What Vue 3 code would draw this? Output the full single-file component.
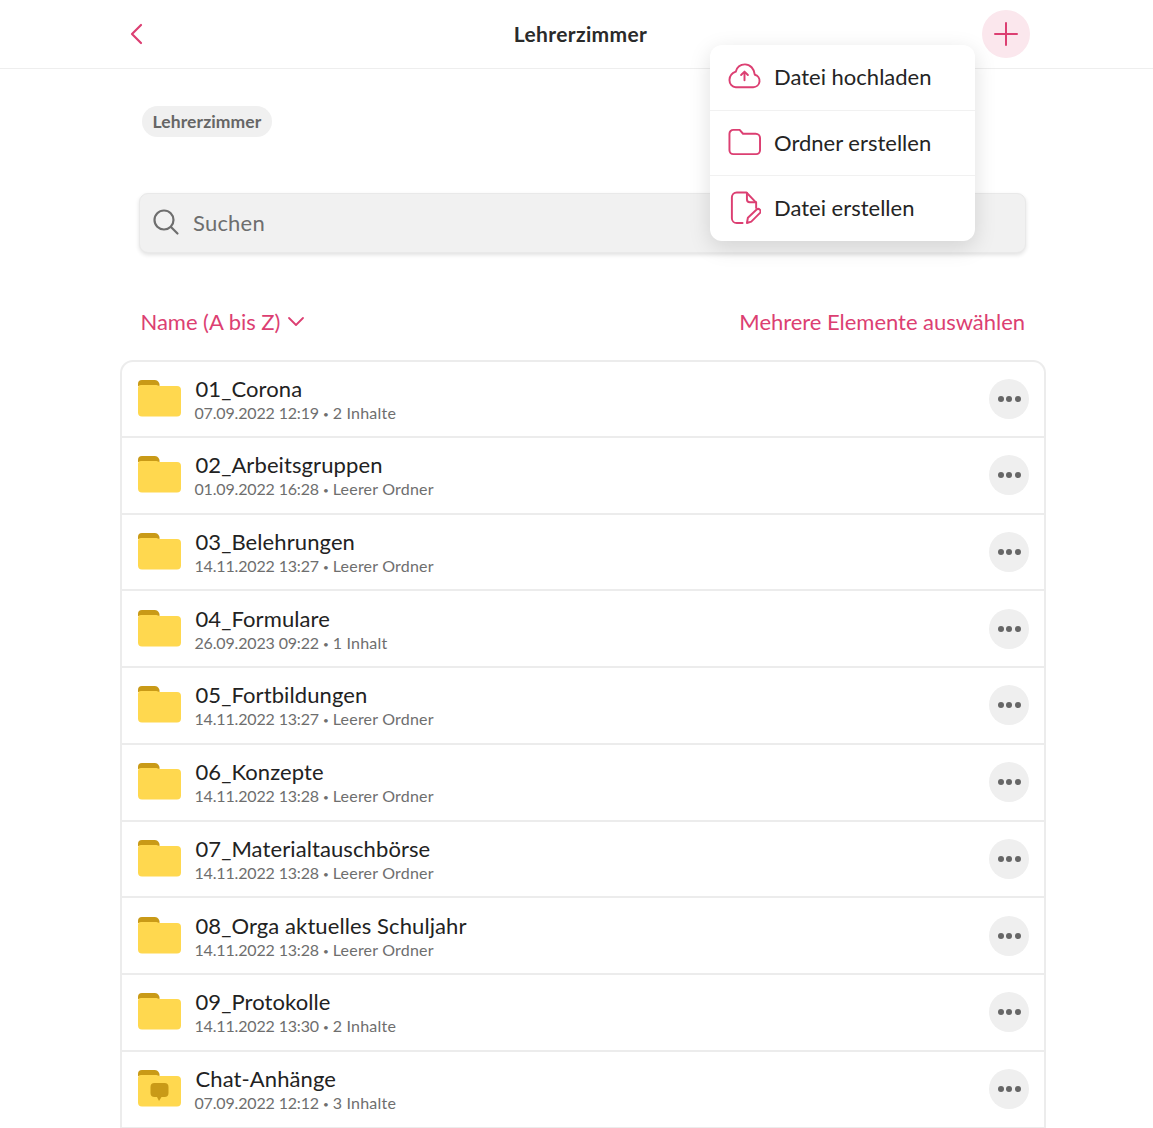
<script setup>
const rows = [
  { name: '01_Corona', date: '07.09.2022 12:19', info: '2 Inhalte' },
  { name: '02_Arbeitsgruppen', date: '01.09.2022 16:28', info: 'Leerer Ordner' },
  { name: '03_Belehrungen', date: '14.11.2022 13:27', info: 'Leerer Ordner' },
  { name: '04_Formulare', date: '26.09.2023 09:22', info: '1 Inhalt' },
  { name: '05_Fortbildungen', date: '14.11.2022 13:27', info: 'Leerer Ordner' },
  { name: '06_Konzepte', date: '14.11.2022 13:28', info: 'Leerer Ordner' },
  { name: '07_Materialtauschbörse', date: '14.11.2022 13:28', info: 'Leerer Ordner' },
  { name: '08_Orga aktuelles Schuljahr', date: '14.11.2022 13:28', info: 'Leerer Ordner' },
  { name: '09_Protokolle', date: '14.11.2022 13:30', info: '2 Inhalte' },
  { name: 'Chat-Anhänge', date: '07.09.2022 12:12', info: '3 Inhalte', chat: true },
]
</script>

<template>
  <div class="page">
    <header class="top">
      <button class="back" aria-label="Zurück">
        <svg width="14" height="22" viewBox="0 0 14 22"><path d="M12 2 3 11l9 9" fill="none" stroke="#dc3f72" stroke-width="2.2" stroke-linecap="round" stroke-linejoin="round"/></svg>
      </button>
      <h1 class="title">Lehrerzimmer</h1>
      <button class="plus" aria-label="Neu">
        <svg width="26" height="26" viewBox="0 0 26 26"><path d="M13 2v22M2 13h22" fill="none" stroke="#dc3f72" stroke-width="2" stroke-linecap="round"/></svg>
      </button>
      <div class="menu">
        <div class="menu-item">
          <svg width="34" height="28" viewBox="0 0 34 28" fill="none" stroke="#dc3f72" stroke-width="2" stroke-linecap="round" stroke-linejoin="round"><path d="M8 25.5h18a6.5 6.5 0 0 0 1.6-12.8C27 6.5 22.800 2 17.500 2 12.800 2 9.200 5 8 9.500 4.200 11 1.500 14.500 1.500 18c0 4.500 3 7.500 6.500 7.500Z"/><path d="M17 18.500v-9M13.500 13 17 9.500l3.500 3.500"/></svg>
          <span>Datei hochladen</span>
        </div>
        <div class="menu-item">
          <svg width="34" height="28" viewBox="0 0 34 28" fill="none" stroke="#dc3f72" stroke-width="2" stroke-linecap="round" stroke-linejoin="round"><path d="M1.500 5.500a4 4 0 0 1 4-4h6.500l3.500 4h13a4.500 4.500 0 0 1 4.500 4.500v12.500a4 4 0 0 1-4 4h-23.500a4 4 0 0 1-4-4Z"/></svg>
          <span>Ordner erstellen</span>
        </div>
        <div class="menu-item">
          <svg width="34" height="34" viewBox="0 0 34 34" fill="none" stroke="#dc3f72" stroke-width="2" stroke-linecap="round" stroke-linejoin="round"><path d="M15 32.500H9a5 5 0 0 1-5-5V6a5 5 0 0 1 5-5h10L29 11.500v5.500"/><path d="M19.500 1.500V8a3 3 0 0 0 3 3H29"/><path d="m19.500 32.500 1-5.500 9-8.500a2.500 2.500 0 0 1 3.500 3.500l-9 9Z"/></svg>
          <span>Datei erstellen</span>
        </div>
      </div>
    </header>

    <main class="content">
      <div class="crumb">Lehrerzimmer</div>

      <div class="search">
        <svg width="28" height="28" viewBox="0 0 28 28" fill="none" stroke="#6e6e6e" stroke-width="2.200" stroke-linecap="round"><circle cx="12" cy="12" r="9.500"/><path d="m19 19 6.500 6.500"/></svg>
        <span>Suchen</span>
      </div>

      <div class="sort">
        <span class="sort-by">Name (A bis Z)
          <svg width="18" height="11" viewBox="0 0 18 11"><path d="m2 2 7 7 7-7" fill="none" stroke="#dc3f72" stroke-width="1.800" stroke-linecap="round" stroke-linejoin="round"/></svg>
        </span>
        <span>Mehrere Elemente auswählen</span>
      </div>

      <div class="list">
        <div v-for="r in rows" :key="r.name" class="row">
          <svg class="folder" width="43" height="37" viewBox="0 0 43 37">
            <path d="M0 4a4 4 0 0 1 4-4h13a5 5 0 0 1 4.500 6H0Z" fill="#c99a17"/>
            <path d="M0 8a3 3 0 0 1 3-3h15.500l3 1H39a4 4 0 0 1 4 4v22.500a4 4 0 0 1-4 4H4a4 4 0 0 1-4-4Z" fill="#ffd84f"/>
            <path v-if="r.chat" d="M16.500 13h10a4 4 0 0 1 4 4v6a4 4 0 0 1-4 4h-3l-2.500 4-2-4h-2.500a4 4 0 0 1-4-4v-6a4 4 0 0 1 4-4Z" fill="#c99a17"/>
          </svg>
          <div class="text">
            <div class="name">{{ r.name }}</div>
            <div class="meta"><span class="date">{{ r.date }}</span><span class="dot">•</span><span class="info">{{ r.info }}</span></div>
          </div>
          <button class="more" aria-label="Mehr"><i></i><i></i><i></i></button>
        </div>
      </div>
    </main>
  </div>
</template>

<style>
html, body { margin: 0; background: #fff; }
</style>

<style scoped>
.page {
  width: 1153px;
  height: 1128px;
  overflow: hidden;
  font-family: Lato, "Noto Sans", sans-serif;
  color: #222;
  background: #fff;
}
button { border: 0; padding: 0; background: none; display: flex; align-items: center; justify-content: center; }
.top {
  position: relative;
  height: 68px;
  box-sizing: content-box;
  border-top: 1px solid #f2f2f2;
  margin-top: -1px;
  border-bottom: 1px solid #eeeeee;
  display: flex;
  align-items: center;
  justify-content: space-between;
  padding: 0 123px 0 129px;
}
.back { width: 14px; height: 22px; }
.title { margin: -2px 0 0 36px; font-size: 21px; font-weight: 700; letter-spacing: .35px; color: #2a2a2a; }
.plus { width: 48px; height: 48px; border-radius: 50%; background: #fbe7ed; }
.menu {
  position: absolute;
  left: 710px;
  top: 45px;
  width: 265px;
  height: 196px;
  background: #fff;
  border-radius: 12px;
  box-shadow: 0 6px 22px rgba(0,0,0,.13);
  display: flex;
  flex-direction: column;
  z-index: 2;
}
.menu-item {
  flex: 1;
  display: flex;
  align-items: center;
  gap: 13px;
  padding-left: 18px;
  padding-bottom: 2px;
  font-size: 22px;
  letter-spacing: 0;
  color: #242424;
  border-bottom: 1px solid #f1f1f1;
}
.menu-item svg { width: 33px; flex: none; }
.menu-item:last-child { border-bottom: 0; }
.content { padding: 37px 107px 0 120px; }
.crumb {
  margin-left: 22px;
  width: 130px;
  height: 31px;
  box-sizing: border-box;
  border-radius: 16px;
  background: #f0f0f0;
  color: #666;
  font-size: 17.500px;
  font-weight: 700;
  letter-spacing: .1px;
  display: flex;
  align-items: center;
  justify-content: center;
}
.search {
  margin: 56px 20px 0 19px;
  height: 60px;
  box-sizing: border-box;
  border: 1px solid #e9e9e9;
  border-radius: 9px;
  background: #f1f1f1;
  box-shadow: 0 2px 4px rgba(0,0,0,.12);
  display: flex;
  align-items: center;
  gap: 13px;
  padding: 0 0 2px 12px;
  color: #6e6e6e;
  font-size: 22px;
  letter-spacing: .2px;
}
.sort {
  margin: 55px 21px 0 20.500px;
  height: 26px;
  display: flex;
  align-items: center;
  justify-content: space-between;
  color: #dc3f72;
  font-size: 22px;
  letter-spacing: -.03px;
}
.sort-by { display: flex; align-items: center; gap: 7px; }
.list {
  margin-top: 26px;
  border: 2px solid #ececec;
  border-bottom: 0;
  border-radius: 13px 13px 0 0;
  box-sizing: border-box;
}
.row {
  height: 76.750px;
  box-sizing: border-box;
  border-bottom: 2px solid #ececec;
  display: flex;
  align-items: center;
  padding: 0 15px 0 16px;
}
.row:first-child { height: 75.750px; }
.folder { flex: none; margin-top: -1px; }
.text { flex: 1; margin-left: 14px; min-width: 0; }
.name { font-size: 22px; line-height: 26px; letter-spacing: .1px; color: #222; margin: 2px 0 0 0.500px; }
.meta { font-size: 16px; line-height: 20px; color: #6e6e6e; margin: 1px 0 0 -0.500px; }
.date { letter-spacing: -.16px; }
.info { letter-spacing: .2px; }
.dot { font-size: 10px; margin: 0 4px; vertical-align: 1px; }
.more {
  width: 40px;
  height: 40px;
  border-radius: 50%;
  background: #efefef;
  gap: 2.500px;
}
.more i { width: 6px; height: 6px; border-radius: 50%; background: #666; }
</style>
